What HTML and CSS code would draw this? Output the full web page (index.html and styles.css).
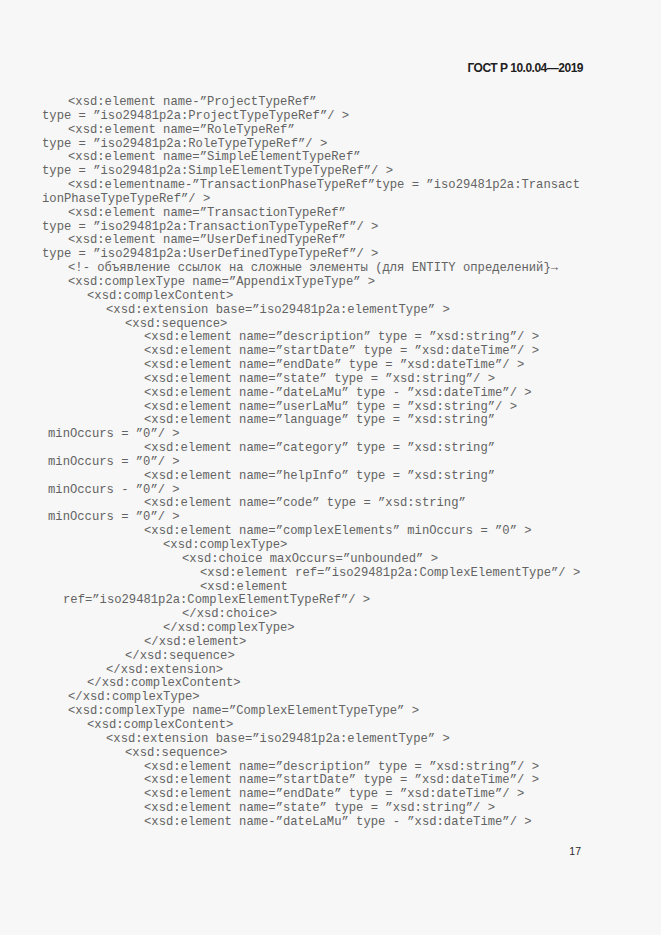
FILE: index.html
```html
<!DOCTYPE html>
<html lang="ru">
<head>
<meta charset="utf-8">
<title>ГОСТ Р 10.0.04—2019</title>
<link rel="stylesheet" href="styles.css">
</head>
<body>
<div class="page">
  <div class="header">ГОСТ Р 10.0.04—2019</div>
  <div class="code">
    <div class="ln l0">&lt;xsd:element name-”ProjectTypeRef”</div>
    <div class="ln w0">type = ”iso29481p2a:ProjectTypeTypeRef”/ &gt;</div>
    <div class="ln l0">&lt;xsd:element name=”RoleTypeRef”</div>
    <div class="ln w0">type = ”iso29481p2a:RoleTypeTypeRef”/ &gt;</div>
    <div class="ln l0">&lt;xsd:element name=”SimpleElementTypeRef”</div>
    <div class="ln w0">type = ”iso29481p2a:SimpleElementTypeTypeRef”/ &gt;</div>
    <div class="ln l0">&lt;xsd:elementname-”TransactionPhaseTypeRef”type = ”iso29481p2a:Transact</div>
    <div class="ln w0">ionPhaseTypeTypeRef”/ &gt;</div>
    <div class="ln l0">&lt;xsd:element name=”TransactionTypeRef”</div>
    <div class="ln w0">type = ”iso29481p2a:TransactionTypeTypeRef”/ &gt;</div>
    <div class="ln l0">&lt;xsd:element name=”UserDefinedTypeRef”</div>
    <div class="ln w0">type = ”iso29481p2a:UserDefinedTypeTypeRef”/ &gt;</div>
    <div class="ln l0">&lt;!- объявление ссылок на сложные элементы (для ENTITY определений}→</div>
    <div class="ln l0">&lt;xsd:complexType name=”AppendixTypeType” &gt;</div>
    <div class="ln l1">&lt;xsd:complexContent&gt;</div>
    <div class="ln l2">&lt;xsd:extension base=”iso29481p2a:elementType” &gt;</div>
    <div class="ln l3">&lt;xsd:sequence&gt;</div>
    <div class="ln l4">&lt;xsd:element name=”description” type = ”xsd:string”/ &gt;</div>
    <div class="ln l4">&lt;xsd:element name=”startDate” type = ”xsd:dateTime”/ &gt;</div>
    <div class="ln l4">&lt;xsd:element name=”endDate” type = ”xsd:dateTime”/ &gt;</div>
    <div class="ln l4">&lt;xsd:element name=”state” type = ”xsd:string”/ &gt;</div>
    <div class="ln l4">&lt;xsd:element name-”dateLaMu” type - ”xsd:dateTime”/ &gt;</div>
    <div class="ln l4">&lt;xsd:element name=”userLaMu” type = ”xsd:string”/ &gt;</div>
    <div class="ln l4">&lt;xsd:element name=”language” type = ”xsd:string”</div>
    <div class="ln w1">minOccurs = ”0”/ &gt;</div>
    <div class="ln l4">&lt;xsd:element name=”category” type = ”xsd:string”</div>
    <div class="ln w1">minOccurs = ”0”/ &gt;</div>
    <div class="ln l4">&lt;xsd:element name=”helpInfo” type = ”xsd:string”</div>
    <div class="ln w1">minOccurs - ”0”/ &gt;</div>
    <div class="ln l4">&lt;xsd:element name=”code” type = ”xsd:string”</div>
    <div class="ln w1">minOccurs = ”0”/ &gt;</div>
    <div class="ln l4">&lt;xsd:element name=”complexElements” minOccurs = ”0” &gt;</div>
    <div class="ln l5">&lt;xsd:complexType&gt;</div>
    <div class="ln l6">&lt;xsd:choice maxOccurs=”unbounded” &gt;</div>
    <div class="ln l7">&lt;xsd:element ref=”iso29481p2a:ComplexElementType”/ &gt;</div>
    <div class="ln l7">&lt;xsd:element</div>
    <div class="ln w2">ref=”iso29481p2a:ComplexElementTypeRef”/ &gt;</div>
    <div class="ln l6">&lt;/xsd:choice&gt;</div>
    <div class="ln l5">&lt;/xsd:complexType&gt;</div>
    <div class="ln l4">&lt;/xsd:element&gt;</div>
    <div class="ln l3">&lt;/xsd:sequence&gt;</div>
    <div class="ln l2">&lt;/xsd:extension&gt;</div>
    <div class="ln l1">&lt;/xsd:complexContent&gt;</div>
    <div class="ln l0">&lt;/xsd:complexType&gt;</div>
    <div class="ln l0">&lt;xsd:complexType name=”ComplexElementTypeType” &gt;</div>
    <div class="ln l1">&lt;xsd:complexContent&gt;</div>
    <div class="ln l2">&lt;xsd:extension base=”iso29481p2a:elementType” &gt;</div>
    <div class="ln l3">&lt;xsd:sequence&gt;</div>
    <div class="ln l4">&lt;xsd:element name=”description” type = ”xsd:string”/ &gt;</div>
    <div class="ln l4">&lt;xsd:element name=”startDate” type = ”xsd:dateTime”/ &gt;</div>
    <div class="ln l4">&lt;xsd:element name=”endDate” type = ”xsd:dateTime”/ &gt;</div>
    <div class="ln l4">&lt;xsd:element name=”state” type = ”xsd:string”/ &gt;</div>
    <div class="ln l4">&lt;xsd:element name-”dateLaMu” type - ”xsd:dateTime”/ &gt;</div>
  </div>
  <div class="pagenum">17</div>
</div>
</body>
</html>
```
FILE: styles.css
```css
html, body {
  margin: 0;
  padding: 0;
  background: #f7f7f7;
}

.page {
  width: 661px;
  height: 935px;
  box-sizing: border-box;
  padding-top: 61px;
  display: flex;
  flex-direction: column;
}

.header {
  text-align: right;
  padding-right: 78px;
  font-family: "Liberation Sans", Arial, sans-serif;
  font-weight: bold;
  font-size: 12px;
  line-height: 14px;
  letter-spacing: -0.5px;
  color: #1e1e1e;
}

.code {
  margin-top: 21px;
  font-family: "Liberation Mono", "Courier New", monospace;
  font-size: 12.2px;
  line-height: 13.85px;
  color: #636363;
}

.ln {
  height: 13.85px;
  white-space: pre;
}

.w0 { padding-left: 42px; }
.w1 { padding-left: 48px; }
.w2 { padding-left: 63px; }

.l0 { padding-left: 68px; }
.l1 { padding-left: 87px; }
.l2 { padding-left: 106px; }
.l3 { padding-left: 125px; }
.l4 { padding-left: 144px; }
.l5 { padding-left: 163px; }
.l6 { padding-left: 182px; }
.l7 { padding-left: 200px; }

.pagenum {
  margin-top: 15px;
  text-align: right;
  padding-right: 80px;
  font-family: "Liberation Sans", Arial, sans-serif;
  font-size: 10.5px;
  line-height: 12px;
  color: #2a2a2a;
}
```
